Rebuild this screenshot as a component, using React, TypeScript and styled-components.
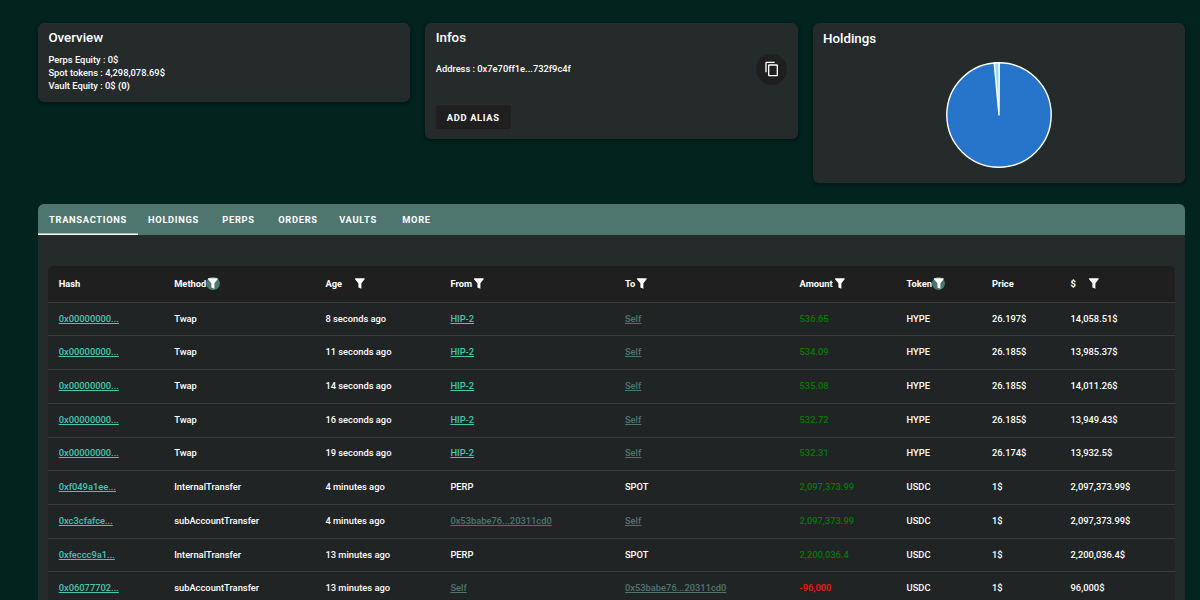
import React from 'react';
import styled, { createGlobalStyle, css } from 'styled-components';
import { MdContentCopy } from 'react-icons/md';

const GlobalStyle = createGlobalStyle`
  * { box-sizing: border-box; }
  body {
    margin: 0;
    background: #02231e;
    color: #fff;
    font-family: Roboto, "Liberation Sans", sans-serif;
    font-size: 9.33px;
    font-weight: 500;
    overflow: hidden;
  }
`;

const Page = styled.main`
  height: 600px;
  overflow: hidden;
  padding: 23px 15px 0 38px;
`;

const Cards = styled.section`
  display: grid;
  grid-template-columns: repeat(3, 1fr);
  column-gap: 15px;
  align-items: start;
`;

const Card = styled.article<{ $height: number }>`
  height: ${(p) => p.$height}px;
  padding: 6px 10.4px;
  background: #252b2a;
  border-radius: 6px;
  box-shadow: 0 2px 3px rgba(0, 0, 0, 0.22), 0 1px 5px rgba(0, 0, 0, 0.14);
`;

const CardTitle = styled.h2<{ $drop?: boolean }>`
  margin: ${(p) => (p.$drop ? 1 : 0)}px 0 0;
  font-size: 13.33px;
  line-height: 17px;
  font-weight: 500;
`;

const Facts = styled.div`
  margin-top: 7px;
  line-height: 13px;
`;

const AddressRow = styled.div`
  display: flex;
  align-items: center;
  justify-content: space-between;
  height: 31px;
  margin-top: 8px;
`;

const Address = styled.span`
  padding-bottom: 2px;
`;

const CopyButton = styled.button`
  display: flex;
  align-items: center;
  justify-content: center;
  width: 31px;
  height: 31px;
  padding: 0 0 2px;
  border: 0;
  border-radius: 50%;
  background: #1f1f1f;
  color: #fff;
  font-size: 16px;
`;

const AliasButton = styled.button`
  display: block;
  width: 75px;
  height: 24px;
  margin-top: 20px;
  padding: 0;
  border: 0;
  border-radius: 2.7px;
  background: #1f1f1f;
  color: #fff;
  font: 700 9.33px Roboto, sans-serif;
  letter-spacing: 0.68px;
`;

const Chart = styled.svg`
  display: block;
  width: 108px;
  height: 108px;
  margin: 14px auto 0;
`;

const Panel = styled.section`
  height: 420px;
  margin-top: 21px;
  background: #252b2a;
  border-radius: 6px 6px 0 0;
  overflow: hidden;
`;

const Tabs = styled.nav`
  display: flex;
  height: 31px;
  background: #4e766f;
`;

const Tab = styled.button<{ $width: number; $active?: boolean }>`
  width: ${(p) => p.$width}px;
  height: 31px;
  padding: 0 0 1px;
  border: 0;
  background: none;
  box-shadow: ${(p) => (p.$active ? 'inset 0 -1.5px #fff' : 'none')};
  color: #fff;
  font: 700 9.33px Roboto, sans-serif;
  letter-spacing: 0.68px;
`;

const Table = styled.div`
  margin: 30.5px 9.7px 0 10.3px;
  background: #212424;
  border-radius: 6px 6px 0 0;
  overflow: hidden;
  letter-spacing: 0;
`;

const rowGrid = css`
  display: grid;
  grid-template-columns: 115.5px 151.2px 125px 174.6px 174.6px 107px 85.4px 78.6px 1fr;
  align-items: center;
  padding-left: 10.4px;
`;

const HeadRow = styled.div`
  ${rowGrid}
  height: 36.2px;
  background: #1f1f1f;
`;

const HeadCell = styled.div<{ $gap?: number }>`
  display: flex;
  align-items: center;
  gap: ${(p) => p.$gap ?? 0}px;
  font-weight: 700;
`;

const FilterBadge = styled.span<{ $filled?: boolean }>`
  display: flex;
  align-items: center;
  justify-content: center;
  width: 13.3px;
  height: 13.3px;
  border-radius: 50%;
  background: ${(p) => (p.$filled ? '#4e766f' : 'transparent')};
`;

const Row = styled.div`
  ${rowGrid}
  height: 33.72px;
  padding-bottom: 2px;
  border-top: 1px solid #3a3d3d;
`;

type Tone = 'plain' | 'link' | 'muted' | 'up' | 'down';

const tones: Record<Tone, string> = {
  plain: '#fff',
  link: '#49c5b1',
  muted: '#4e766f',
  up: '#087808',
  down: '#f01a1a',
};

const Cell = styled.span<{ $tone?: Tone }>`
  color: ${(p) => tones[p.$tone ?? 'plain']};
  text-decoration: ${(p) => (p.$tone === 'link' || p.$tone === 'muted' ? 'underline' : 'none')};
`;

const Funnel = () => (
  <svg width="10" height="11" viewBox="0 0 10 11" fill="#fff">
    <path d="M0 0.2H9.6V1.3L6.4 5.2V10.8L3.4 9.4V5.2L0 1.3Z" />
  </svg>
);

const tabs: [string, number][] = [
  ['TRANSACTIONS', 100],
  ['HOLDINGS', 71],
  ['PERPS', 59],
  ['ORDERS', 60],
  ['VAULTS', 60],
  ['MORE', 57],
];

const heads: { label: string; filter?: boolean; filled?: boolean; gap?: number }[] = [
  { label: 'Hash' },
  { label: 'Method', filter: true, filled: true },
  { label: 'Age', filter: true, gap: 11.5 },
  { label: 'From', filter: true, gap: 0.4 },
  { label: 'To', filter: true, gap: 0.4 },
  { label: 'Amount', filter: true, gap: 0.4 },
  { label: 'Token', filter: true, filled: true },
  { label: 'Price' },
  { label: '$', filter: true, gap: 11.5 },
];

const rows: string[][] = [
  ['0x00000000...', 'Twap', '8 seconds ago', 'HIP-2', 'Self', '536.65', 'HYPE', '26.197$', '14,058.51$'],
  ['0x00000000...', 'Twap', '11 seconds ago', 'HIP-2', 'Self', '534.09', 'HYPE', '26.185$', '13,985.37$'],
  ['0x00000000...', 'Twap', '14 seconds ago', 'HIP-2', 'Self', '535.08', 'HYPE', '26.185$', '14,011.26$'],
  ['0x00000000...', 'Twap', '16 seconds ago', 'HIP-2', 'Self', '532.72', 'HYPE', '26.185$', '13,949.43$'],
  ['0x00000000...', 'Twap', '19 seconds ago', 'HIP-2', 'Self', '532.31', 'HYPE', '26.174$', '13,932.5$'],
  ['0xf049a1ee...', 'InternalTransfer', '4 minutes ago', 'PERP', 'SPOT', '2,097,373.99', 'USDC', '1$', '2,097,373.99$'],
  ['0xc3cfafce...', 'subAccountTransfer', '4 minutes ago', '0x53babe76...20311cd0', 'Self', '2,097,373.99', 'USDC', '1$', '2,097,373.99$'],
  ['0xfeccc9a1...', 'InternalTransfer', '13 minutes ago', 'PERP', 'SPOT', '2,200,036.4', 'USDC', '1$', '2,200,036.4$'],
  ['0x06077702...', 'subAccountTransfer', '13 minutes ago', 'Self', '0x53babe76...20311cd0', '-96,000', 'USDC', '1$', '96,000$'],
];

const toneOf = (value: string, column: number): Tone => {
  if (column === 0 || value === 'HIP-2') return 'link';
  if (value === 'Self' || value.startsWith('0x')) return 'muted';
  if (column === 5) return value.startsWith('-') ? 'down' : 'up';
  return 'plain';
};

export default function App() {
  return (
    <Page>
      <GlobalStyle />
      <Cards>
        <Card $height={79}>
          <CardTitle>Overview</CardTitle>
          <Facts>
            <div>Perps Equity : 0$</div>
            <div>Spot tokens : 4,298,078.69$</div>
            <div>Vault Equity : 0$ <b>(0)</b></div>
          </Facts>
        </Card>
        <Card $height={116}>
          <CardTitle>Infos</CardTitle>
          <AddressRow>
            <Address>Address : 0x7e70ff1e...732f9c4f</Address>
            <CopyButton><MdContentCopy /></CopyButton>
          </AddressRow>
          <AliasButton>ADD ALIAS</AliasButton>
        </Card>
        <Card $height={160}>
          <CardTitle $drop>Holdings</CardTitle>
          <Chart viewBox="-54 -54 108 108" stroke="#fff" strokeWidth="1.4" strokeLinejoin="round">
            <circle r="52.2" fill="#2775ca" />
            <path d="M0 0L-4.8 -52A52.2 52.2 0 0 1 0.3 -52.2Z" fill="#97dfee" />
          </Chart>
        </Card>
      </Cards>
      <Panel>
        <Tabs>
          {tabs.map(([label, width], i) => (
            <Tab key={label} $width={width} $active={i === 0}>{label}</Tab>
          ))}
        </Tabs>
        <Table>
          <HeadRow>
            {heads.map((h) => (
              <HeadCell key={h.label} $gap={h.gap}>
                {h.label}
                {h.filter && <FilterBadge $filled={h.filled}><Funnel /></FilterBadge>}
              </HeadCell>
            ))}
          </HeadRow>
          {rows.map((row, r) => (
            <Row key={r}>
              {row.map((value, c) => (
                <Cell key={c} $tone={toneOf(value, c)}>{value}</Cell>
              ))}
            </Row>
          ))}
        </Table>
      </Panel>
    </Page>
  );
}
